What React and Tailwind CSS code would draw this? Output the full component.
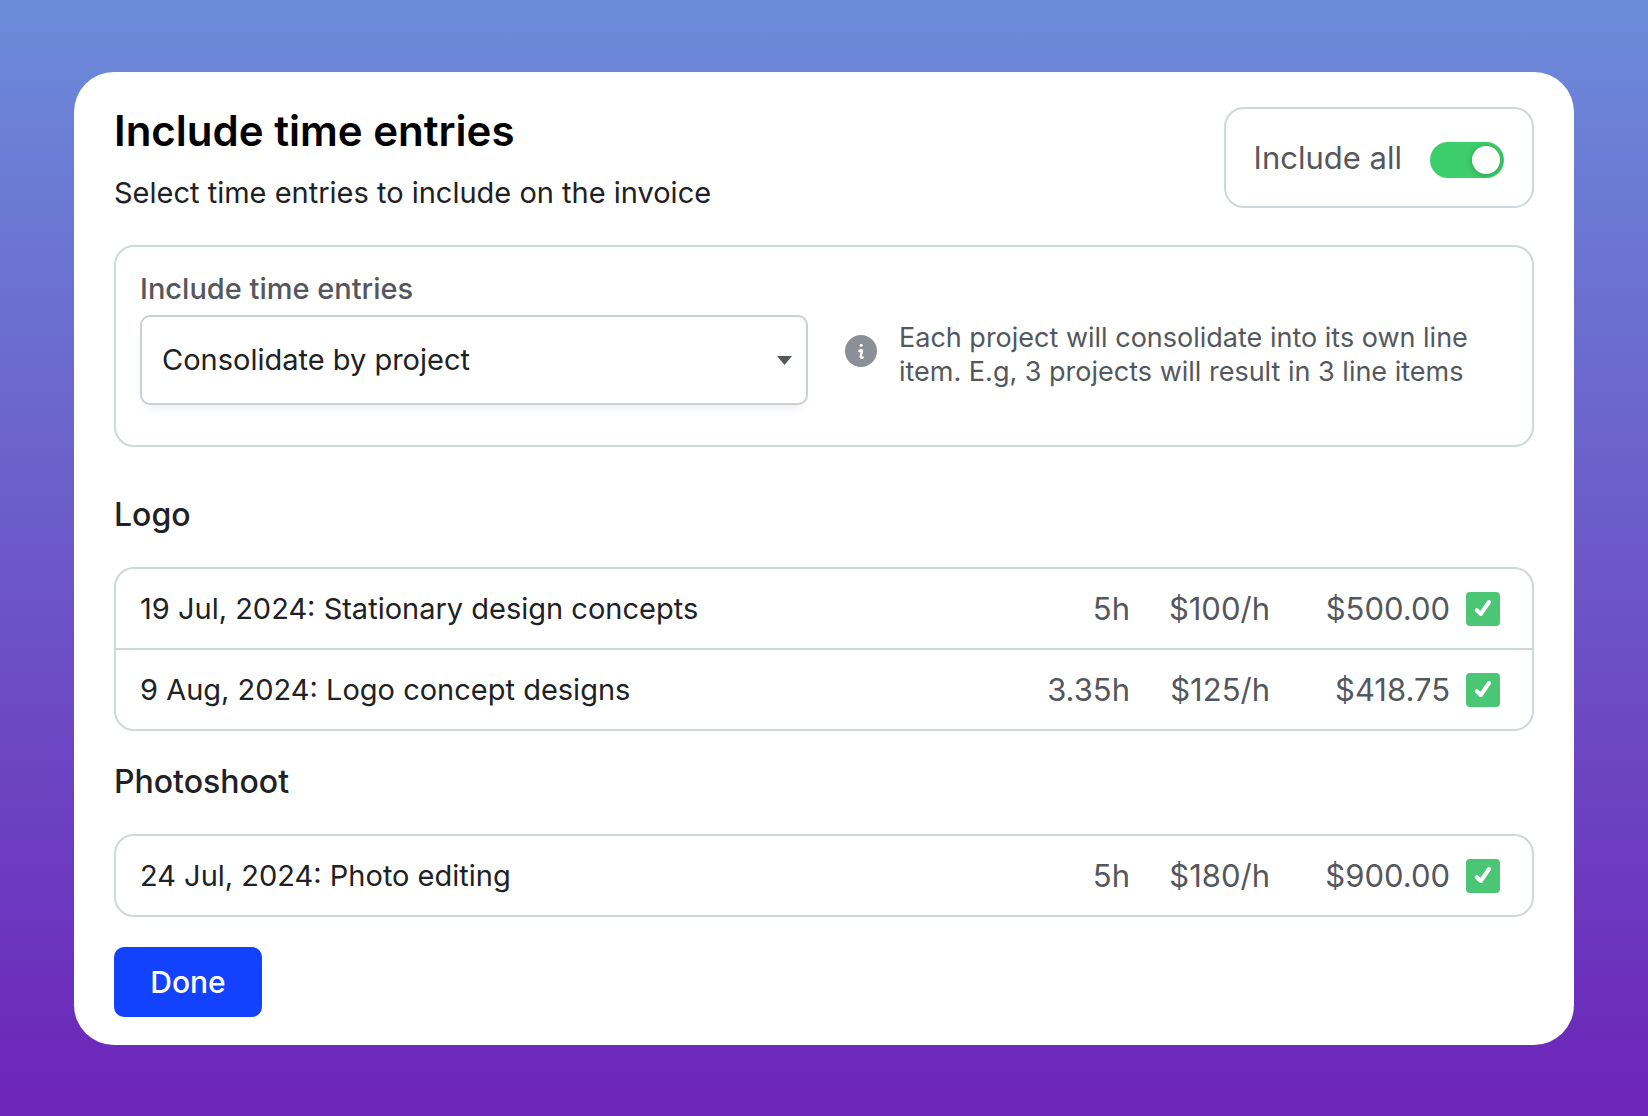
import React, { useState } from "react";

const groups = [
  {
    name: "Logo",
    entries: [
      { id: "e1", label: "19 Jul, 2024: Stationary design concepts", hours: "5h", rate: "$100/h", amount: "$500.00" },
      { id: "e2", label: "9 Aug, 2024: Logo concept designs", hours: "3.35h", rate: "$125/h", amount: "$418.75" },
    ],
  },
  {
    name: "Photoshoot",
    entries: [
      { id: "e3", label: "24 Jul, 2024: Photo editing", hours: "5h", rate: "$180/h", amount: "$900.00" },
    ],
  },
];

function Toggle({ id, checked, onChange }) {
  return (
    <span className="mt-1 grid h-9 w-[74px] items-center">
      <input
        id={id}
        type="checkbox"
        role="switch"
        checked={checked}
        onChange={onChange}
        className="[grid-area:1/1] h-9 w-[74px] cursor-pointer appearance-none rounded-full bg-gray-300 checked:bg-[#3bce6b]"
      />
      <span
        className={
          checked
            ? "pointer-events-none [grid-area:1/1] mr-1 size-7 justify-self-end rounded-full bg-white shadow-[0_1px_6px_rgba(0,0,0,0.25)]"
            : "pointer-events-none [grid-area:1/1] ml-1 size-7 justify-self-start rounded-full bg-white shadow-[0_1px_6px_rgba(0,0,0,0.25)]"
        }
      />
    </span>
  );
}

function Tick({ label, checked, onChange }) {
  return (
    <span className="ml-auto grid size-[34px]">
      <input
        type="checkbox"
        aria-label={label}
        checked={checked}
        onChange={onChange}
        className="[grid-area:1/1] size-[34px] cursor-pointer appearance-none rounded border-2 border-[#ced4da] bg-white checked:border-[#4bc674] checked:bg-[#4bc674]"
      />
      <svg viewBox="0 0 34 34" className="pointer-events-none [grid-area:1/1] size-[34px]" aria-hidden="true">
        <path d="M10.8 18.2 L14.8 22 L23 10" fill="none" stroke="#fff" strokeWidth="4" strokeLinecap="round" strokeLinejoin="round" />
      </svg>
    </span>
  );
}

export default function App() {
  const [selected, setSelected] = useState({ e1: true, e2: true, e3: true });
  const all = Object.values(selected).every(Boolean);
  const toggleAll = () => setSelected({ e1: !all, e2: !all, e3: !all });
  const toggle = (id) => setSelected((s) => ({ ...s, [id]: !s[id] }));

  return (
    <div className="min-h-screen bg-[linear-gradient(180deg,#6b8cd9_0%,#6d24b8_100%)] px-[74px] py-[72px] font-['Inter','Liberation_Sans',sans-serif] text-[#202124]">
      <main className="rounded-[40px] bg-white px-10 pt-[35px] pb-7">
        <header className="flex items-start justify-between">
          <div>
            <h1 className="text-[42px] leading-[48px] font-semibold text-black">Include time entries</h1>
            <p className="mt-5 text-[29px] leading-9">Select time entries to include on the invoice</p>
          </div>
          <div className="flex h-[101px] items-center gap-7 rounded-[20px] border-2 border-[#d0d7db] px-7">
            <label htmlFor="include-all" className="text-[31px] leading-10 text-[#54575c]">Include all</label>
            <Toggle id="include-all" checked={all} onChange={toggleAll} />
          </div>
        </header>

        <section className="mt-[34px] flex gap-[37px] rounded-[20px] border-2 border-[#d0d7db] px-6 pt-6 pb-10">
          <div className="w-[calc(50%-16px)]">
            <label htmlFor="mode" className="block text-[29px] leading-9 font-medium text-[#54575c]">Include time entries</label>
            <div className="mt-2 grid items-center">
              <select
                id="mode"
                className="[grid-area:1/1] h-[90px] w-full appearance-none rounded-[10px] border-2 border-[#cbd0d5] bg-white px-5 text-[29px] shadow-[0_8px_10px_-4px_rgba(0,0,0,0.06)]"
              >
                <option>Consolidate by project</option>
                <option>One line item per entry</option>
              </select>
              <svg viewBox="0 0 15 9" className="pointer-events-none [grid-area:1/1] mr-4 h-[9px] w-[15px] justify-self-end" aria-hidden="true">
                <path d="M0 0H15L7.5 9Z" fill="#54575c" />
              </svg>
            </div>
          </div>
          <div className="mt-[50px] flex flex-1 gap-[22px]">
            <svg viewBox="0 0 32 32" className="mt-[14px] size-8 shrink-0" aria-hidden="true">
              <circle cx="16" cy="16" r="16" fill="#8a8f98" />
              <circle cx="16.2" cy="10.2" r="1.5" fill="#fff" />
              <path d="M14.4 16C15.6 14.6 17.3 14.8 16.9 16.6L15.9 20.2C15.3 22.4 16.4 23.4 17.8 22.4" fill="none" stroke="#fff" strokeWidth="2.4" strokeLinecap="round" />
            </svg>
            <p className="text-[27px] leading-[34px] text-[#54575c]">
              Each project will consolidate into its own line item. E.g, 3 projects will result in 3 line items
            </p>
          </div>
        </section>

        <div className="mt-12 flex flex-col gap-[31px]">
          {groups.map((g) => (
            <section key={g.name}>
              <h2 className="text-[32px] leading-10 font-medium">{g.name}</h2>
              <div className="mt-8 rounded-[20px] border-2 border-[#d0d7db]">
                <table className="w-full table-fixed border-separate border-spacing-0">
                  <tbody>
                    {g.entries.map((e) => (
                      <tr
                        key={e.id}
                        className="h-[81px] text-right text-[31px] leading-10 text-[#54575c] last:h-[79px] [&:not(:last-child)>*]:border-b-2 [&:not(:last-child)>*]:border-[#d0d7db]"
                      >
                        <th scope="row" className="pl-6 text-left text-[29px] font-normal text-[#202124]">{e.label}</th>
                        <td className="w-[140px]">{e.hours}</td>
                        <td className="w-[140px]">{e.rate}</td>
                        <td className="w-[180px]">{e.amount}</td>
                        <td className="w-[82px] pr-8">
                          <Tick label={e.label} checked={selected[e.id]} onChange={() => toggle(e.id)} />
                        </td>
                      </tr>
                    ))}
                  </tbody>
                </table>
              </div>
            </section>
          ))}
        </div>

        <button type="button" className="mt-[30px] h-[70px] min-w-[148px] cursor-pointer rounded-[10px] bg-[#1342ff] px-9 text-[30px] font-medium text-white">
          Done
        </button>
      </main>
    </div>
  );
}
